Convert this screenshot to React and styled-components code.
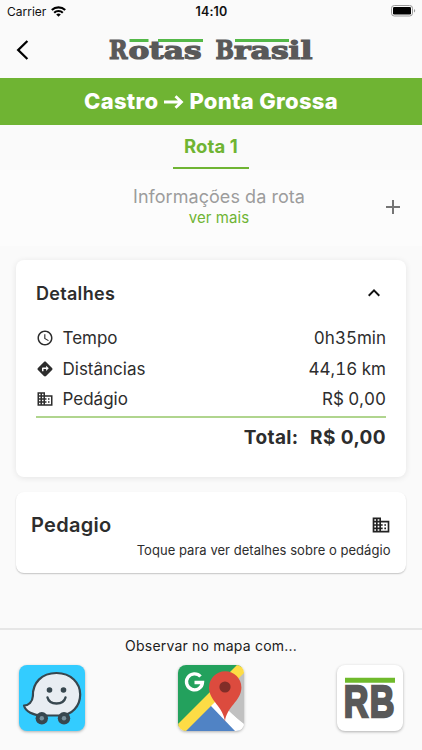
import React from "react";
import styled, { createGlobalStyle } from "styled-components";
import {
  MdAccessTime,
  MdAdd,
  MdBusiness,
  MdDirections,
  MdKeyboardArrowUp,
} from "react-icons/md";

const GlobalStyle = createGlobalStyle`
  * {
    box-sizing: border-box;
  }
  body {
    margin: 0;
    background: #fafafa;
    font-family: Inter, "Liberation Sans", sans-serif;
    color: #2d2d2d;
  }
  svg {
    display: block;
    flex: none;
  }
`

const Screen = styled.div`
  height: 750px;
  display: flex;
  flex-direction: column;
  overflow: hidden;
`

const StatusBar = styled.div`
  display: grid;
  grid-template-columns: 1fr auto 1fr;
  align-items: center;
  height: 22px;
  padding: 0 6px 0 7px;
  color: #111;
`

const Carrier = styled.div`
  display: flex;
  align-items: center;
  gap: 5px;
  font-size: 12px;
  letter-spacing: 0;
`

const Clock = styled.div`
  font-size: 12.5px;
  font-weight: 600;
  letter-spacing: 0.2px;
`

const Battery = styled.div`
  justify-self: end;
`

const Header = styled.header`
  display: grid;
  grid-template-columns: 91px 1fr 91px;
  align-items: center;
  height: 56px;
  padding: 0 16px;
`

const Banner = styled.h1`
  margin: 0;
  height: 47px;
  display: flex;
  align-items: center;
  justify-content: center;
  gap: 5.5px;
  background: #6fb433;
  color: #fff;
  font-size: 22px;
  font-weight: 800;
  letter-spacing: 0.3px;
  line-height: 47px;
  white-space: nowrap;
`

const Tabs = styled.nav`
  display: flex;
  justify-content: center;
  height: 45px;
`

const Tab = styled.div`
  width: 76px;
  height: 44px;
  border-bottom: 2px solid #6fb433;
  color: #6fb433;
  font-size: 18.5px;
  font-weight: 700;
  letter-spacing: 0.1px;
  line-height: 43px;
  text-align: center;
  white-space: nowrap;
`

const Info = styled.section`
  display: grid;
  grid-template-columns: 24px 1fr 24px;
  align-items: center;
  height: 76px;
  padding: 0 17px 2px 33px;
  background: #fcfcfc;
`

const InfoText = styled.div`
  grid-column: 2;
  text-align: center;
`

const InfoTitle = styled.div`
  font-size: 18px;
  line-height: 22px;
  letter-spacing: 0.05px;
  color: #9c9c9c;
`

const InfoLink = styled.div`
  font-size: 15px;
  line-height: 20px;
  letter-spacing: 0.1px;
  color: #6fb433;
`

const Details = styled.section`
  height: 217px;
  margin: 14px 16px 0 15.5px;
  padding: 17px 20px 0 20.5px;
  border-radius: 8px;
  background: #fff;
  box-shadow: 0 1px 6px rgba(0, 0, 0, 0.09);
`

const CardHead = styled.div`
  display: flex;
  align-items: center;
  justify-content: space-between;
  height: 32px;
`

const CardTitle = styled.h2`
  margin: 0;
  font-size: ${(props) => props.$size}px;
  font-weight: 600;
  letter-spacing: 0.3px;
`

const Rows = styled.div`
  margin-top: 14px;
  padding-bottom: 1px;
  border-bottom: 2px solid #b0d58e;
`

const Row = styled.div`
  display: flex;
  align-items: center;
  height: 30.6px;
  font-size: 17px;
`

const RowLabel = styled.span`
  flex: 1;
  margin-left: 8.5px;
`

const RowValue = styled.span`
  font-variant-numeric: tabular-nums;
`

const Total = styled.div`
  display: flex;
  justify-content: flex-end;
  gap: 11.5px;
  height: 38px;
  line-height: 39px;
  font-size: 19px;
  font-weight: 700;
  letter-spacing: 0.4px;
`

const Toll = styled.section`
  height: 81px;
  margin: 15px 16px 0 15.5px;
  padding: 17px 15.5px 0;
  border-radius: 8px;
  background: #fff;
  box-shadow: 0 1px 1.5px rgba(0, 0, 0, 0.22);
`

const TollHint = styled.div`
  font-size: 13px;
  line-height: 18px;
  letter-spacing: 0.04px;
  text-align: right;
`

const Footer = styled.footer`
  margin-top: auto;
  height: 122px;
  border-top: 2px solid #e6e6e6;
`

const FooterLabel = styled.div`
  height: 35px;
  line-height: 32px;
  text-align: center;
  font-size: 14px;
  letter-spacing: 0.2px;
  color: #1c1c1c;
`

const Apps = styled.div`
  display: flex;
  justify-content: space-between;
  padding: 0 18.7px 0 18.6px;
`

const AppButton = styled.div`
  width: 66px;
  height: 66px;
  border-radius: 8px;
  overflow: hidden;
  background: ${(props) => props.$color};
  box-shadow: 0 1px 3px rgba(0, 0, 0, 0.3);
`

const WifiIcon = () => (
  <svg width="15" height="11" viewBox="0 0 15 11" fill="none" stroke="#000" strokeWidth="2.1">
    <path d="M0.8 4.1a9.5 9.5 0 0 1 13.4 0M3.2 6.7a6.1 6.1 0 0 1 8.6 0" />
    <path d="M7.5 10.8L5.2 8.5a3.3 3.3 0 0 1 4.6 0z" fill="#000" stroke="none" />
  </svg>
)

const BatteryIcon = () => (
  <svg width="25" height="12" viewBox="0 0 25 12">
    <rect x="0.5" y="0.5" width="21" height="10.5" rx="2.8" fill="none" stroke="#999" />
    <rect x="2" y="2" width="18" height="7.5" rx="1.3" />
    <path d="M23 4v3.5c1.6-.6 1.6-2.9 0-3.5z" fill="#999" />
  </svg>
)

const BackIcon = () => (
  <svg width="13" height="20" viewBox="0 0 13 20" fill="none" stroke="#000" strokeWidth="2.3">
    <path d="M11.4 1L2.2 10l9.2 9" />
  </svg>
)

const ArrowIcon = () => (
  <svg width="20" height="16" viewBox="0 0 20 16" fill="none" stroke="#fff" strokeWidth="2.8">
    <path d="M0 8h17M11.500 2.200L17.500 8l-6 5.800" />
  </svg>
)

const BrandLogo = () => (
  <svg width="208" height="36" viewBox="0 -5 208 36">
    <g
      fill="#595959"
      stroke="#595959"
      strokeWidth="1.2"
      fontFamily="'DejaVu Serif', serif"
      fontWeight="700"
    >
      <text transform="translate(2 21.500) scale(0.86 1)" fontSize="26">R</text>
      <text x="21.500" y="21.500" fontSize="24.500" textLength="73" lengthAdjust="spacingAndGlyphs">otas</text>
      <text transform="translate(108.500 21.500) scale(0.84 1)" fontSize="26">B</text>
      <text x="127" y="21.500" fontSize="24.500" textLength="78.500" lengthAdjust="spacingAndGlyphs">rasil</text>
    </g>
    <path d="M22.500 3.500h19M51 3.500h45M128 3.500h54" stroke="#54b848" strokeWidth="2.8" />
  </svg>
)

const WazeIcon = () => (
  <svg width="66" height="66" viewBox="0 0 66 66">
    <path
      d="M5 40.500c4.500-.2 8.500-3.500 8.900-9.500C13.500 18 22.500 8 37.500 8C52 8 61.200 18 61.200 29.500C61.200 41 53 50.300 41 50.500H24C14 50.500 6.500 46.500 5 40.500z"
      fill="#e8edf2"
      stroke="#37474f"
      strokeWidth="2.2"
      strokeLinejoin="round"
    />
    <g fill="#37474f">
      <circle cx="30.500" cy="25" r="2.8" />
      <circle cx="44.500" cy="25" r="2.8" />
      <circle cx="22.800" cy="53.300" r="6.200" />
      <circle cx="45" cy="53.300" r="6.200" />
    </g>
    <path d="M28.500 32.500c2 8 16 8 18 0" fill="none" stroke="#37474f" strokeWidth="2.4" strokeLinecap="round" />
    <circle cx="22.800" cy="53.300" r="2.200" fill="#78909c" />
    <circle cx="45" cy="53.300" r="2.200" fill="#78909c" />
  </svg>
)

const MapsIcon = () => (
  <svg width="66" height="66" viewBox="0 0 66 66">
    <path d="M0 0h66L0 62z" fill="#23a15d" />
    <path d="M66 7v53L36 32z" fill="#c1c1c1" />
    <path d="M5 66L35 38l27 28z" fill="#5083c5" />
    <path d="M28 41l6-7 32 25v7h-9L33 41z" fill="#fff" />
    <path d="M0 66v-7L59 0h7v8L8 66z" fill="#fddc45" />
    <path d="M47 57C46 42 31 36 31 22.500a16.200 16.200 0 0 1 32.400 0C63.400 36 48 42 47 57z" fill="#dc4b3e" />
    <circle cx="47" cy="22" r="5.600" fill="#812d28" />
    <path d="M22.500 11.500a8 8 0 1 0 2 6h-8" fill="none" stroke="#fff" strokeWidth="3.300" />
  </svg>
)

const RbIcon = () => (
  <svg width="66" height="66" viewBox="0 0 66 66">
    <path d="M8 15.300h50" stroke="#6fba2c" strokeWidth="5" />
    <text
      transform="translate(6.800 51.800) scale(0.76 1)"
      fill="#595959"
      stroke="#595959"
      strokeWidth="2.4"
      fontFamily="'Liberation Sans', sans-serif"
      fontWeight="700"
      fontSize="45"
      letterSpacing="1.5"
    >
      RB
    </text>
  </svg>
)

const rows = [
  { Icon: MdAccessTime, label: "Tempo", value: "0h35min" },
  { Icon: MdDirections, label: "Distâncias", value: "44,16 km" },
  { Icon: MdBusiness, label: "Pedágio", value: "R$ 0,00" },
]

function App() {
  return (
    <>
      <GlobalStyle />
      <Screen>
        <StatusBar>
          <Carrier>Carrier <WifiIcon /></Carrier>
          <Clock>14:10</Clock>
          <Battery><BatteryIcon /></Battery>
        </StatusBar>

        <Header>
          <BackIcon />
          <BrandLogo />
        </Header>

        <Banner>
          <span>Castro</span>
          <ArrowIcon />
          <span>Ponta Grossa</span>
        </Banner>

        <Tabs>
          <Tab>Rota 1</Tab>
        </Tabs>

        <Info>
          <InfoText>
            <InfoTitle>Informações da rota</InfoTitle>
            <InfoLink>ver mais</InfoLink>
          </InfoText>
          <MdAdd size={24} color="#757575" />
        </Info>

        <Details>
          <CardHead>
            <CardTitle $size={18}>Detalhes</CardTitle>
            <MdKeyboardArrowUp size={24} color="#111" />
          </CardHead>
          <Rows>
            {rows.map(({ Icon, label, value }) => (
              <Row key={label}>
                <Icon size={18} />
                <RowLabel>{label}</RowLabel>
                <RowValue>{value}</RowValue>
              </Row>
            ))}
          </Rows>
          <Total>
            <span>Total:</span>
            <span>R$ 0,00</span>
          </Total>
        </Details>

        <Toll>
          <CardHead>
            <CardTitle $size={20}>Pedagio</CardTitle>
            <MdBusiness size={20} color="#222" />
          </CardHead>
          <TollHint>Toque para ver detalhes sobre o pedágio</TollHint>
        </Toll>

        <Footer>
          <FooterLabel>Observar no mapa com...</FooterLabel>
          <Apps>
            <AppButton $color="#33ccff"><WazeIcon /></AppButton>
            <AppButton $color="#fff"><MapsIcon /></AppButton>
            <AppButton $color="#fff"><RbIcon /></AppButton>
          </Apps>
        </Footer>
      </Screen>
    </>
  )
}

export default App;
